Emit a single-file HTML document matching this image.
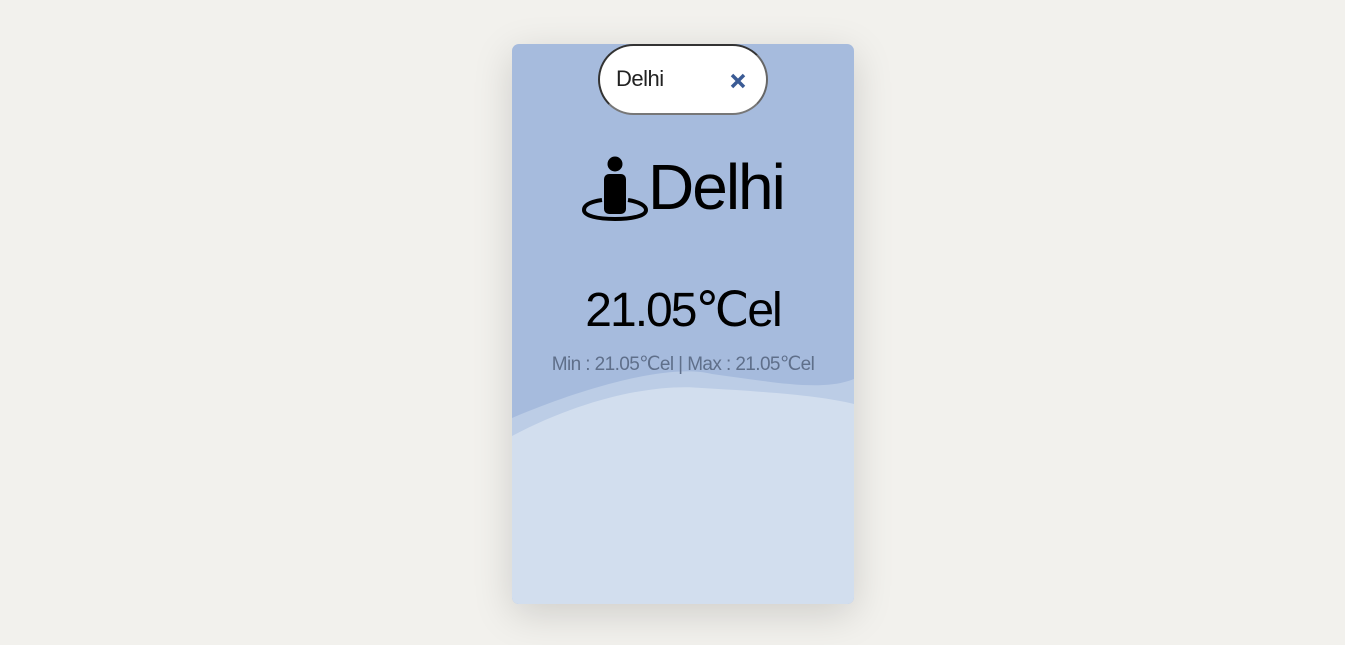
<!DOCTYPE html>
<html><head><style>
body{margin:0;background:#f2f1ed;width:1345px;height:645px;overflow:hidden;font-family:"Liberation Sans",sans-serif;}
.card{position:absolute;left:512px;top:44px;width:342px;height:560px;background:#a6bbdd;border-radius:7px;overflow:hidden;box-shadow:0 10px 40px rgba(0,0,0,0.15);}
.pill{position:absolute;left:86px;top:0;width:166px;height:67px;border:2px solid #333;border-bottom-color:#777;border-right-color:#666;border-radius:36px;background:#fff;}
.pill span{position:absolute;left:16px;top:20px;font-size:22px;color:#222;font-weight:300;letter-spacing:-0.5px}
.t{position:absolute;width:100%;text-align:center;color:#000;left:0}
</style></head><body>
<div class="card">
<svg style="position:absolute;left:0;top:0" width="342" height="560">
<path d="M0 374 C80 340 160 320 200 330 C260 338 310 348 342 335 L342 560 L0 560Z" fill="#bccde6"/>
<path d="M0 392 C80 350 150 340 190 344 C260 348 310 352 342 360 L342 560 L0 560Z" fill="#d2deee"/>
</svg>
<div class="pill"><span>Delhi</span>
<svg style="position:absolute;left:130px;top:27px" width="16" height="16"><path d="M2 2L14 14M14 2L2 14" stroke="#3b5b95" stroke-width="3.5"/></svg></div>
<svg style="position:absolute;left:70px;top:112px" width="66" height="66">
<circle cx="33" cy="8" r="7.5"/>
<rect x="22" y="18" width="22" height="40" rx="5"/>
<path d="M20 44 C6 46 2 50 2 54 C2 60 16 63 33 63 C50 63 64 60 64 54 C64 50 58 46 46 44" fill="none" stroke="#000" stroke-width="4"/>
</svg>
<div style="position:absolute;left:136px;top:106px;font-size:64px;letter-spacing:-2px;color:#000">Delhi</div>
<div class="t" style="top:238px;font-size:48px;letter-spacing:-2px;">21.05℃el</div>
<div class="t" style="top:309px;font-size:19px;color:#5f6f8a;letter-spacing:-0.6px">Min : 21.05℃el | Max : 21.05℃el</div>
</div>
</body></html>
